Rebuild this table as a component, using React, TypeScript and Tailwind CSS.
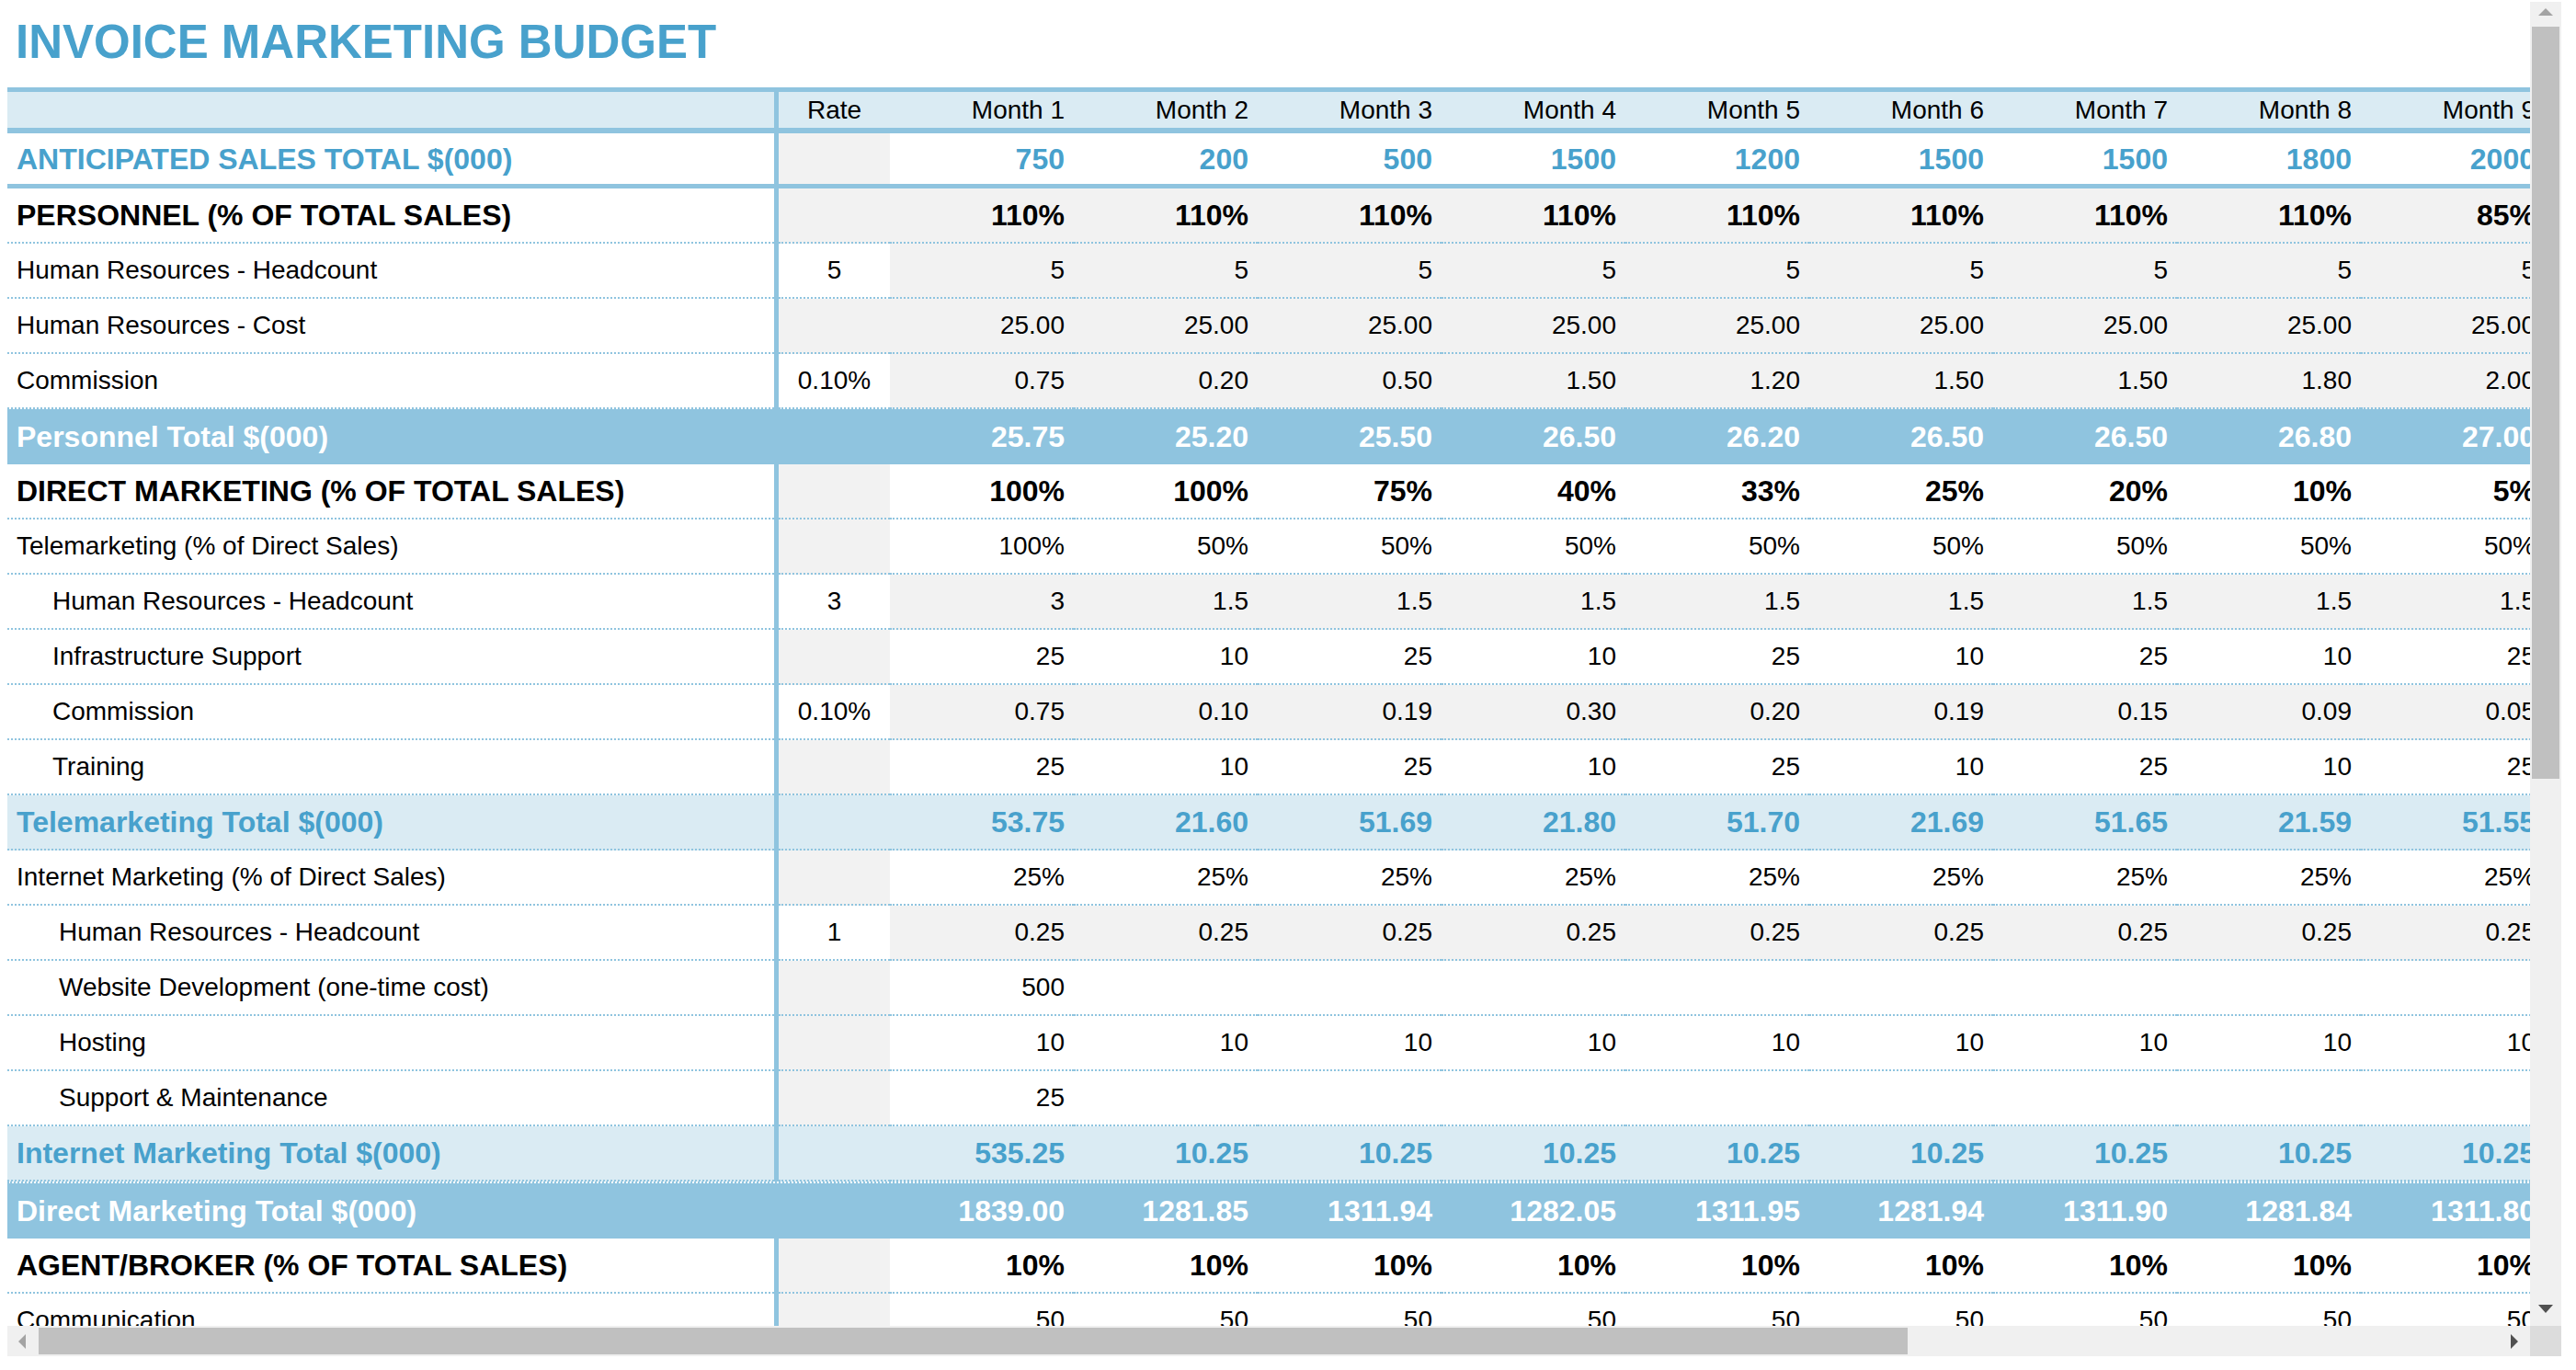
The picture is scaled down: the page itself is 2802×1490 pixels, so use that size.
import React from "react";

type Kind = "section" | "item" | "subtotal" | "total";

interface BudgetRow {
  label: string;
  kind: Kind;
  indent?: "none" | "tele" | "web";
  rate?: string;
  shade?: boolean;
  ruleAbove?: boolean;
  values: string[];
}

const repeat = (v: string) => Array.from({ length: 9 }, () => v);

const months = Array.from({ length: 9 }, (_, i) => `Month ${i + 1}`);
const sales = ["750", "200", "500", "1500", "1200", "1500", "1500", "1800", "2000"];

const rows: BudgetRow[] = [
  { label: "PERSONNEL (% OF TOTAL SALES)", kind: "section", shade: true, values: [...repeat("110%").slice(0, 8), "85%"] },
  { label: "Human Resources - Headcount", kind: "item", rate: "5", shade: true, values: repeat("5") },
  { label: "Human Resources - Cost", kind: "item", shade: true, values: repeat("25.00") },
  {
    label: "Commission",
    kind: "item",
    rate: "0.10%",
    shade: true,
    values: ["0.75", "0.20", "0.50", "1.50", "1.20", "1.50", "1.50", "1.80", "2.00"],
  },
  {
    label: "Personnel Total $(000)",
    kind: "total",
    values: ["25.75", "25.20", "25.50", "26.50", "26.20", "26.50", "26.50", "26.80", "27.00"],
  },
  {
    label: "DIRECT MARKETING (% OF TOTAL SALES)",
    kind: "section",
    values: ["100%", "100%", "75%", "40%", "33%", "25%", "20%", "10%", "5%"],
  },
  { label: "Telemarketing (% of Direct Sales)", kind: "item", values: ["100%", ...repeat("50%").slice(0, 8)] },
  { label: "Human Resources - Headcount", kind: "item", indent: "tele", rate: "3", values: ["3", ...repeat("1.5").slice(0, 8)] },
  { label: "Infrastructure Support", kind: "item", indent: "tele", values: ["25", "10", "25", "10", "25", "10", "25", "10", "25"] },
  {
    label: "Commission",
    kind: "item",
    indent: "tele",
    rate: "0.10%",
    values: ["0.75", "0.10", "0.19", "0.30", "0.20", "0.19", "0.15", "0.09", "0.05"],
  },
  { label: "Training", kind: "item", indent: "tele", values: ["25", "10", "25", "10", "25", "10", "25", "10", "25"] },
  {
    label: "Telemarketing Total $(000)",
    kind: "subtotal",
    values: ["53.75", "21.60", "51.69", "21.80", "51.70", "21.69", "51.65", "21.59", "51.55"],
  },
  { label: "Internet Marketing (% of Direct Sales)", kind: "item", values: repeat("25%") },
  { label: "Human Resources - Headcount", kind: "item", indent: "web", rate: "1", values: repeat("0.25") },
  { label: "Website Development (one-time cost)", kind: "item", indent: "web", values: ["500", ...repeat("").slice(0, 8)] },
  { label: "Hosting", kind: "item", indent: "web", values: repeat("10") },
  { label: "Support & Maintenance", kind: "item", indent: "web", values: ["25", ...repeat("").slice(0, 8)] },
  { label: "Internet Marketing Total $(000)", kind: "subtotal", values: ["535.25", ...repeat("10.25").slice(0, 8)] },
  {
    label: "Direct Marketing Total $(000)",
    kind: "total",
    ruleAbove: true,
    values: ["1839.00", "1281.85", "1311.94", "1282.05", "1311.95", "1281.94", "1311.90", "1281.84", "1311.80"],
  },
  { label: "AGENT/BROKER (% OF TOTAL SALES)", kind: "section", values: repeat("10%") },
  { label: "Communication", kind: "item", values: repeat("50") },
];

const indentClass = { none: "pl-[10px]", tele: "pl-[49px]", web: "pl-[56px]" };
const dotted = "border-b-2 border-dotted border-[#8fc4df]";

function Divider({ color = "bg-[#8fc4df]" }: { color?: string }) {
  return <div className={`w-[5px] shrink-0 self-stretch ${color}`} />;
}

function Row({ row }: { row: BudgetRow }) {
  if (row.kind === "total") {
    const box = row.ruleAbove
      ? "h-[62px] border-t-2 border-dotted border-[#8fc4df] bg-clip-padding"
      : "h-[60px]";
    return (
      <div className={`flex shrink-0 items-center bg-[#8fc4df] text-[32px] font-bold text-white ${box}`}>
        <div className="w-[960px] shrink-0 whitespace-nowrap pl-[10px]">{row.label}</div>
        {row.values.map((v, i) => (
          <div key={i} className="w-[200px] shrink-0 pr-[10px] text-right">
            {v}
          </div>
        ))}
      </div>
    );
  }

  if (row.kind === "subtotal") {
    return (
      <div className="flex h-[60px] shrink-0 text-[32px] font-bold text-[#48a1cc]">
        <div className={`flex w-[834px] shrink-0 items-center whitespace-nowrap bg-[#daebf3] pl-[10px] ${dotted}`}>
          {row.label}
        </div>
        <Divider />
        <div className={`w-[121px] shrink-0 bg-[#daebf3] ${dotted}`} />
        {row.values.map((v, i) => (
          <div key={i} className={`flex w-[200px] shrink-0 items-center justify-end bg-[#daebf3] pr-[10px] ${dotted}`}>
            {v}
          </div>
        ))}
      </div>
    );
  }

  const text = row.kind === "section" ? "text-[32px] font-bold" : "text-[28px]";
  const monthBg = row.shade || row.rate ? "bg-[#f2f2f2]" : "bg-white";
  const rateBg = row.rate ? "bg-white" : "bg-[#f2f2f2]";

  return (
    <div className={`flex h-[60px] shrink-0 text-black ${text}`}>
      <div className={`flex w-[834px] shrink-0 items-center whitespace-nowrap bg-white ${indentClass[row.indent ?? "none"]} ${dotted}`}>
        {row.label}
      </div>
      <Divider />
      <div className={`flex w-[121px] shrink-0 items-center justify-center ${rateBg} ${dotted}`}>{row.rate}</div>
      {row.values.map((v, i) => (
        <div key={i} className={`flex w-[200px] shrink-0 items-center justify-end pr-[10px] ${monthBg} ${dotted}`}>
          {v}
        </div>
      ))}
    </div>
  );
}

function VerticalScrollbar() {
  return (
    <div className="relative h-[1440px] w-[34px] shrink-0 bg-[#f0f0f0]">
      <svg className="absolute left-[9px] top-[7px]" width="16" height="8" viewBox="0 0 16 8">
        <polygon points="0,8 8,0 16,8" fill="#a3a3a3" />
      </svg>
      <div className="absolute left-[2px] top-[27px] h-[818px] w-[30px] bg-[#c0c0c0]" />
      <svg className="absolute left-[9px] top-[1417px]" width="16" height="9" viewBox="0 0 16 9">
        <polygon points="0,0 16,0 8,9" fill="#505050" />
      </svg>
    </div>
  );
}

function HorizontalScrollbar() {
  return (
    <div className="flex h-[33px] shrink-0">
      <div className="relative h-[33px] w-[2744px] bg-[#f0f0f0]">
        <svg className="absolute left-[12px] top-[9px]" width="8" height="16" viewBox="0 0 8 16">
          <polygon points="8,0 8,16 0,8" fill="#a3a3a3" />
        </svg>
        <div className="absolute left-[34px] top-[2px] h-[29px] w-[2033px] bg-[#c0c0c0]" />
        <svg className="absolute left-[2723px] top-[9px]" width="8" height="16" viewBox="0 0 8 16">
          <polygon points="0,0 8,8 0,16" fill="#505050" />
        </svg>
      </div>
      <div className="h-[33px] w-[34px] bg-[#dcdcdc]" />
    </div>
  );
}

export default function App() {
  return (
    <div className="min-h-screen bg-white pl-[8px] pt-[2px] font-['Liberation_Sans',Arial,sans-serif]">
      <div className="flex w-[2778px] flex-col">
        <div className="flex h-[1440px]">
          <div className="h-[1440px] w-[2744px] overflow-hidden">
            <div className="flex w-[2760px] flex-col">
              <div className="h-[93px] shrink-0 pl-[9px] pt-[18px]">
                <h1 className="text-[51px] font-bold leading-none text-[#48a1cc]">INVOICE MARKETING BUDGET</h1>
              </div>

              <div className="flex h-[50px] shrink-0 border-t-[5px] border-b-[6px] border-[#8fc4df] bg-[#daebf3] text-[28px] text-black">
                <div className="w-[834px] shrink-0" />
                <Divider />
                <div className="flex w-[121px] shrink-0 items-center justify-center">Rate</div>
                {months.map((m) => (
                  <div key={m} className="flex w-[200px] shrink-0 items-center justify-end whitespace-nowrap pr-[10px]">
                    {m}
                  </div>
                ))}
              </div>

              <div className="flex h-[60px] shrink-0 border-b-[5px] border-[#8fc4df] text-[32px] font-bold text-[#48a1cc]">
                <div className="flex w-[834px] shrink-0 items-center whitespace-nowrap bg-white pl-[10px]">
                  ANTICIPATED SALES TOTAL $(000)
                </div>
                <Divider />
                <div className="w-[121px] shrink-0 bg-[#f2f2f2]" />
                {sales.map((s, i) => (
                  <div key={i} className="flex w-[200px] shrink-0 items-center justify-end bg-white pr-[10px]">
                    {s}
                  </div>
                ))}
              </div>

              {rows.map((row, i) => (
                <Row key={i} row={row} />
              ))}
            </div>
          </div>
          <VerticalScrollbar />
        </div>
        <HorizontalScrollbar />
      </div>
    </div>
  );
}
